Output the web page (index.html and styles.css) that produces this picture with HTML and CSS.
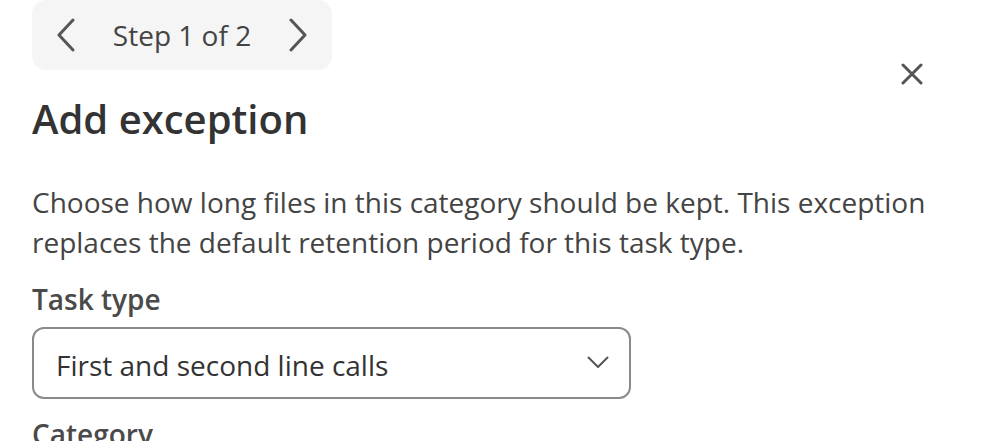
FILE: index.html
```html
<!DOCTYPE html>
<html lang="en">
<head>
<meta charset="utf-8">
<title>Add exception</title>
<link rel="stylesheet" href="styles.css">
</head>
<body>
<div class="dialog">
  <div class="stepper">
    <button class="step-btn" aria-label="Previous step">
      <svg width="20" height="34" viewBox="0 0 20 34"><path d="M17 2 L3 17 L17 32" fill="none" stroke="#555" stroke-width="3" stroke-linecap="round" stroke-linejoin="round"/></svg>
    </button>
    <span class="step-label">Step 1 of 2</span>
    <button class="step-btn" aria-label="Next step">
      <svg width="20" height="34" viewBox="0 0 20 34"><path d="M3 2 L17 17 L3 32" fill="none" stroke="#555" stroke-width="3" stroke-linecap="round" stroke-linejoin="round"/></svg>
    </button>
  </div>
  <button class="close" aria-label="Close">
    <svg width="22" height="22" viewBox="0 0 22 22"><path d="M2 2 L20 20 M20 2 L2 20" fill="none" stroke="#555" stroke-width="3" stroke-linecap="round"/></svg>
  </button>
  <h1 class="title">Add exception</h1>
  <p class="desc">Choose how long files in this category should be kept. This exception replaces the default retention period for this task type.</p>
  <label class="field-label">Task type</label>
  <div class="select">
    <span class="select-value">First and second line calls</span>
    <svg class="select-chevron" width="22" height="14" viewBox="0 0 22 14"><path d="M1.5 1.5 L11 11 L20.5 1.5" fill="none" stroke="#555" stroke-width="2" stroke-linecap="round" stroke-linejoin="round"/></svg>
  </div>
  <label class="field-label category">Category</label>
</div>
</body>
</html>
```
FILE: styles.css
```css
html, body {
  margin: 0;
  padding: 0;
  background: #ffffff;
  overflow: hidden;
}
body {
  font-family: "Open Sans", "Noto Sans", sans-serif;
  color: #333333;
}
.dialog {
  position: relative;
  padding: 0 32px;
  width: 928px;
}
.stepper {
  display: inline-flex;
  align-items: center;
  width: 300px;
  height: 70px;
  box-sizing: border-box;
  padding: 0 24px;
  background: #f5f5f5;
  border-radius: 14px;
  justify-content: space-between;
  vertical-align: top;
}
.step-btn {
  border: 0;
  background: none;
  padding: 0;
  display: flex;
  cursor: pointer;
}
.step-label {
  font-size: 28px;
  color: #444444;
  line-height: 1;
}
.close {
  position: absolute;
  top: 63px;
  left: 901px;
  border: 0;
  background: none;
  padding: 0;
  display: flex;
}
.title {
  margin: 22px 0 0;
  font-size: 40px;
  font-weight: 600;
  line-height: 54px;
  color: #333333;
}
.desc {
  margin: 36px 0 0;
  font-size: 28px;
  line-height: 40px;
  color: #444444;
}
.field-label {
  display: block;
  margin-top: 19px;
  font-size: 28px;
  font-weight: 600;
  line-height: 36px;
  color: #4a4a4a;
}
.select {
  margin-top: 10px;
  width: 599px;
  height: 72px;
  box-sizing: border-box;
  border: 2px solid #8a8a8a;
  border-radius: 12px;
  display: flex;
  align-items: center;
  justify-content: space-between;
  padding: 0 20px 0 22px;
}
.select-value {
  font-size: 28px;
  line-height: 38px;
  padding-top: 4px;
  color: #333333;
}
.field-label.category {
  margin-top: 17px;
}
```
